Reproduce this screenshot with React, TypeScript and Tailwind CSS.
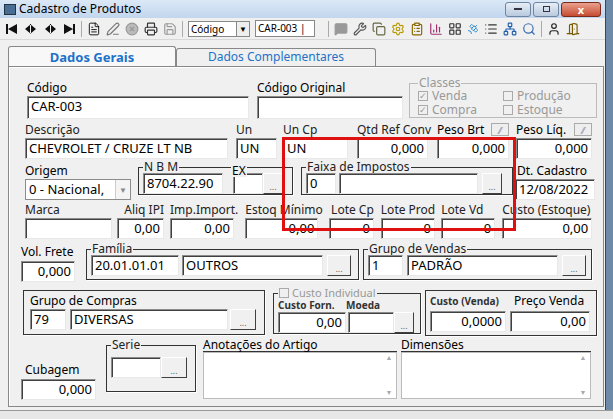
import { FileText, PenLine, XCircle, Printer, Save, MessageSquare, Wrench, Copy, Settings, ClipboardList, BarChart3, LayoutGrid, Satellite, List, Network, Search, User, DoorOpen } from "lucide-react";

const font = "font-['Liberation_Sans',Arial,sans-serif]";

const Inp = ({ w, v = "", right = false, h = "h-[21px]" }: { w: string; v?: string; right?: boolean; h?: string }) => (
  <div className={`${w} ${h} bg-white border border-[#8c8c8c] border-b-[#e8e8e8] border-r-[#e8e8e8] shadow-[inset_1px_1px_0_#404040] text-[13px] leading-[19px] px-[3px] overflow-hidden whitespace-nowrap text-black ${right ? "text-right" : ""}`}>
    {v}
  </div>
);

const Btn = ({ w = "w-[22px]", h = "h-[21px]" }: { w?: string; h?: string }) => (
  <div className={`${w} ${h} bg-[#f0f0f0] border border-white border-b-[#404040] border-r-[#404040] text-[9px] text-[#666] flex items-end justify-center leading-[12px]`}>...</div>
);

const Field = ({ label, w, v, right, cls = "" }: { label: string; w: string; v?: string; right?: boolean; cls?: string }) => (
  <div className={`flex flex-col ${cls}`}>
    <div className="text-[12px] leading-[13px] text-[#222] whitespace-nowrap mb-[2px]">{label}</div>
    <Inp w={w} v={v} right={right} />
  </div>
);

const Group = ({ legend, cls, children, dark = true }: { legend: React.ReactNode; cls: string; children: React.ReactNode; dark?: boolean }) => (
  <fieldset className={`border ${dark ? "border-[#333]" : "border-[#a0a0a0]"} shadow-[1px_1px_0_#fff] px-[4px] pb-[3px] ${cls}`}>
    <legend className="text-[12px] leading-[12px] text-[#222] px-[1px]">{legend}</legend>
    {children}
  </fieldset>
);

const Nav = ({ d }: { d: string }) => (
  <svg width="14" height="14" viewBox="0 0 14 14"><path d={d} fill="#111" /></svg>
);

const Chk = ({ on, label }: { on?: boolean; label: string }) => (
  <span className="flex items-center gap-[4px]">
    <span className="w-[10px] h-[10px] border border-[#aaa] text-[9px] leading-[8px] text-center">{on ? "✓" : ""}</span>
    {label}
  </span>
);

export default function App() {
  return (
    <div className={`w-[613px] h-[419px] bg-[#6d8aa8] overflow-hidden relative ${font}`}>
      <div className="w-[606px] h-[410px] bg-[#f0f0f0] flex flex-col border-r border-[#444]">
        {/* title bar */}
        <div className="h-[18px] bg-gradient-to-b from-[#dbe8f6] to-[#c2d6ee] flex items-center px-[4px] text-[12px] text-black">
          <div className="w-[12px] h-[11px] bg-[#4a6d94] mr-[3px] border border-[#234]" />
          <span>Cadastro de Produtos</span>
          <div className="ml-auto flex gap-[2px]">
            <div className="w-[26px] h-[15px] rounded-[3px] bg-gradient-to-b from-[#e8eef6] to-[#b9c9de] border border-[#6f84a0] flex items-center justify-center"><div className="w-[8px] h-[2px] bg-[#334]" /></div>
            <div className="w-[26px] h-[15px] rounded-[3px] bg-gradient-to-b from-[#e8eef6] to-[#b9c9de] border border-[#6f84a0] flex items-center justify-center"><div className="w-[7px] h-[6px] border border-[#334]" /></div>
            <div className="w-[40px] h-[15px] rounded-[3px] bg-gradient-to-b from-[#e9a08d] to-[#c44a30] border border-[#7a2a1a] text-white text-[11px] font-bold leading-[13px] text-center">x</div>
          </div>
        </div>
        {/* toolbar */}
        <div className="h-[22px] flex items-center gap-[5px] px-[5px] border-b border-[#d8d8d8]">
          <Nav d="M1 2h2v10H1zM12 2v10L3 7z" />
          <Nav d="M12 7L6 2v10zM1 7l6-5v10z" />
          <Nav d="M2 7l6-5v10zM13 7L7 2v10z" />
          <Nav d="M11 2h2v10h-2zM2 2v10l9-5z" />
          <div className="w-px h-[16px] bg-[#aaa]" />
          <FileText size={14} strokeWidth={1.5} />
          <PenLine size={14} color="#777" />
          <XCircle size={14} color="#999" fill="#bbb" />
          <Printer size={14} color="#333" />
          <Save size={14} color="#999" />
          <div className="w-px h-[16px] bg-[#aaa]" />
          <div className="w-[62px] h-[16px] bg-white border border-[#888] text-[10px] leading-[14px] pl-[2px] flex justify-between">Código<span className="w-[13px] border-l border-[#888] bg-[#eee] text-[8px] text-center">▼</span></div>
          <div className="w-[60px] h-[17px] bg-white border border-[#888] text-[10px] leading-[15px] pl-[2px]">CAR-003 |</div>
          <div className="w-px h-[16px] bg-[#aaa] ml-[8px]" />
          <MessageSquare size={14} color="#999" fill="#999" />
          <Wrench size={14} color="#555" />
          <Copy size={14} color="#664" />
          <Settings size={14} color="#b89a00" />
          <ClipboardList size={14} color="#886600" />
          <BarChart3 size={14} color="#a03070" />
          <LayoutGrid size={14} color="#333" />
          <Satellite size={12} color="#2a8ad4" />
          <List size={14} color="#333" />
          <Network size={14} color="#2060b0" />
          <Search size={14} color="#3a6ab0" />
          <div className="w-px h-[16px] bg-[#aaa]" />
          <User size={14} color="#222" />
          <DoorOpen size={14} color="#7a5a00" />
        </div>
        {/* tabs */}
        <div className="flex items-end h-[24px] pl-[8px] mt-[2px]">
          <div className="w-[168px] h-[21px] border border-[#888] border-b-0 rounded-t-[3px] bg-[#f8f8f8] text-[13px] font-bold text-[#1e72c8] text-center leading-[20px] relative top-px">Dados Gerais</div>
          <div className="w-[200px] h-[18px] border border-[#888] border-b-0 rounded-t-[3px] bg-[#f0f0f0] text-[12px] text-[#1e72c8] text-center leading-[16px]">Dados Complementares</div>
        </div>
        {/* panel */}
        <div className="ml-[8px] w-[596px] h-[341px] border border-[#888] shadow-[inset_1px_1px_0_#fff] flex flex-col pt-[10px] relative">
          {/* row 1 */}
          <div className="flex h-[42px]">
            <div className="flex flex-col ml-[18px] mt-[4px]">
              <div className="text-[12px] leading-[13px] mb-[2px]">Código</div>
              <Inp w="w-[222px]" h="h-[23px]" v="CAR-003" />
            </div>
            <div className="flex flex-col ml-[8px] mt-[4px]">
              <div className="text-[12px] leading-[13px] mb-[2px]">Código Original</div>
              <Inp w="w-[146px]" h="h-[23px]" />
            </div>
            <fieldset className="ml-[6px] w-[188px] h-[41px] border border-[#bbb] px-[8px] text-[#999] text-[12px] leading-[14px]">
              <legend className="px-[1px] leading-[12px]">Classes</legend>
              <div className="grid grid-cols-2">
                <Chk on label="Venda" /><Chk label="Produção" />
                <Chk on label="Compra" /><Chk label="Estoque" />
              </div>
            </fieldset>
          </div>
          {/* row 2 */}
          <div className="flex mt-[4px]">
            <Field label="Descrição" w="w-[203px]" v="CHEVROLET / CRUZE LT NB" cls="ml-[16px]" />
            <Field label="Un" w="w-[41px]" v="UN" cls="ml-[8px]" />
            <Field label="Un Cp" w="w-[65px]" v="UN" cls="ml-[6px]" />
            <Field label="Qtd Ref Conv" w="w-[71px]" v="0,000" right cls="ml-[9px]" />
            <div className="flex flex-col ml-[6px]">
              <div className="text-[12px] leading-[13px] mb-[2px] flex justify-between w-[72px]">Peso Brt<span className="w-[18px] h-[13px] border border-[#aaa] bg-[#eee] text-[9px] text-center text-[#88a]">⁄⁄</span></div>
              <Inp w="w-[72px]" v="0,000" right />
            </div>
            <div className="flex flex-col ml-[7px]">
              <div className="text-[12px] leading-[13px] mb-[2px] flex justify-between w-[76px]">Peso Líq.<span className="w-[18px] h-[13px] border border-[#aaa] bg-[#eee] text-[9px] text-center text-[#88a]">⁄⁄</span></div>
              <Inp w="w-[76px]" v="0,000" right />
            </div>
          </div>
          {/* row 3 */}
          <div className="flex mt-[2px] items-start">
            <div className="flex flex-col ml-[16px] mt-[3px]">
              <div className="text-[12px] leading-[13px] mb-[2px]">Origem</div>
              <div className="w-[106px] h-[21px] bg-white border border-[#8c8c8c] flex text-[13px] leading-[19px] pl-[3px] whitespace-nowrap overflow-hidden">
                <span className="flex-1 overflow-hidden">0 - Nacional,</span>
                <span className="w-[15px] border-l border-[#ccc] bg-[#f4f4f4] text-[8px] text-[#888] text-center">▼</span>
              </div>
            </div>
            <Group legend="N B M" cls="ml-[7px] w-[155px] h-[34px] relative">
              <span className="absolute left-[92px] -top-[8px] text-[12px] leading-[12px] bg-[#f0f0f0] px-[1px]">EX</span>
              <div className="flex items-end">
                <Inp w="w-[80px]" v="8704.22.90" />
                <div className="ml-[10px]"><Inp w="w-[30px]" /></div>
                <Btn w="w-[20px]" />
              </div>
            </Group>
            <Group legend="Faixa de Impostos" cls="ml-[8px] w-[212px] h-[34px]">
              <div className="flex">
                <Inp w="w-[30px]" v="0" />
                <div className="ml-[3px]"><Inp w="w-[139px]" /></div>
                <div className="ml-[4px]"><Btn w="w-[20px]" /></div>
              </div>
            </Group>
            <div className="flex flex-col ml-[2px] mt-[3px]">
              <div className="text-[12px] leading-[13px] mb-[2px] pl-[2px]">Dt. Cadastro</div>
              <Inp w="w-[80px]" v="12/08/2022" />
            </div>
          </div>
          {/* row 4 */}
          <div className="flex mt-[3px]">
            <Field label="Marca" w="w-[87px]" cls="ml-[16px]" />
            <Field label="Aliq IPI" w="w-[47px]" v="0,00" right cls="ml-[5px] items-end" />
            <Field label="Imp.Import." w="w-[64px]" v="0,00" right cls="ml-[6px]" />
            <Field label="Estoq Mínimo" w="w-[73px]" v="0,00" right cls="ml-[7px]" />
            <Field label="Lote Cp" w="w-[45px]" v="0" right cls="ml-[6px] items-end" />
            <Field label="Lote Prod" w="w-[54px]" v="0" right cls="ml-[7px]" />
            <Field label="Lote Vd" w="w-[54px]" v="0" right cls="ml-[6px]" />
            <Field label="Custo (Estoque)" w="w-[90px]" v="0,00" right cls="ml-[7px]" />
          </div>
          {/* row 5 */}
          <div className="flex mt-[4px] items-start">
            <div className="flex flex-col ml-[12px] mt-[2px]">
              <div className="text-[12px] leading-[13px] mb-[3px]">Vol. Frete</div>
              <Inp w="w-[54px]" v="0,000" right />
            </div>
            <Group legend="Família" cls="ml-[11px] w-[273px] h-[37px]">
              <div className="flex">
                <Inp w="w-[88px]" v="20.01.01.01" />
                <div className="ml-[3px]"><Inp w="w-[141px]" v="OUTROS" /></div>
                <div className="ml-[4px]"><Btn w="w-[24px]" /></div>
              </div>
            </Group>
            <Group legend="Grupo de Vendas" cls="ml-[4px] w-[229px] h-[37px]">
              <div className="flex">
                <Inp w="w-[35px]" v="1" />
                <div className="ml-[4px]"><Inp w="w-[151px]" v="PADRÃO" /></div>
                <div className="ml-[4px]"><Btn w="w-[24px]" /></div>
              </div>
            </Group>
          </div>
          {/* row 6 */}
          <div className="flex mt-[5px] items-start">
            <div className="ml-[14px] mt-[3px] w-[242px] h-[45px] border border-[#333] shadow-[1px_1px_0_#fff] px-[6px] pt-[3px]">
              <div className="text-[12px] leading-[13px] mb-[2px]">Grupo de Compras</div>
              <div className="flex">
                <Inp w="w-[36px]" v="79" />
                <div className="ml-[4px]"><Inp w="w-[158px]" v="DIVERSAS" /></div>
                <div className="ml-[2px]"><Btn w="w-[26px]" /></div>
              </div>
            </div>
            <Group legend={<span className="text-[#999] text-[11px] flex items-center gap-[3px]"><span className="w-[10px] h-[10px] border border-[#aaa]" />Custo Individual</span>} cls="ml-[8px] w-[148px] h-[47px]">
              <div className="flex text-[10px] font-bold text-[#333] leading-[12px]">
                <span className="w-[68px]">Custo Forn.</span><span>Moeda</span>
              </div>
              <div className="flex mt-[1px]">
                <Inp w="w-[68px]" v="0,00" right />
                <div className="ml-[2px]"><Inp w="w-[46px]" /></div>
                <Btn w="w-[20px]" />
              </div>
            </Group>
            <div className="ml-[4px] mt-[3px] w-[172px] h-[46px] border border-[#333] shadow-[1px_1px_0_#fff] px-[4px] pt-[3px]">
              <div className="flex items-end leading-[14px]">
                <span className="w-[80px] text-[10px] font-bold text-[#333]">Custo (Venda)</span>
                <span className="text-[12px] ml-[4px]">Preço Venda</span>
              </div>
              <div className="flex mt-[3px]">
                <Inp w="w-[76px]" v="0,0000" right />
                <div className="ml-[4px]"><Inp w="w-[80px]" v="0,00" right /></div>
              </div>
            </div>
          </div>
          {/* row 7 */}
          <div className="flex mt-[3px] items-start">
            <div className="flex flex-col ml-[12px] mt-[24px]">
              <div className="text-[12px] leading-[13px] mb-[3px] ml-[4px]">Cubagem</div>
              <Inp w="w-[75px]" v="0,000" right />
            </div>
            <Group legend="Serie" cls="ml-[10px] w-[90px] h-[53px]">
              <div className="flex mt-[6px]">
                <Inp w="w-[50px]" />
                <Btn w="w-[26px]" />
              </div>
            </Group>
            <div className="flex flex-col ml-[7px]">
              <div className="text-[12px] leading-[12px] border-b border-[#333] w-[194px]">Anotações do Artigo</div>
              <div className="w-[194px] h-[47px] bg-white border border-[#bbb] flex justify-end">
                <div className="w-[14px] flex flex-col justify-between text-[7px] text-[#aaa] text-center">▲<span>▼</span></div>
              </div>
            </div>
            <div className="flex flex-col ml-[4px]">
              <div className="text-[12px] leading-[12px] border-b border-[#333] w-[190px]">Dimensões</div>
              <div className="w-[190px] h-[47px] bg-white border border-[#bbb] flex justify-end">
                <div className="w-[14px] flex flex-col justify-between text-[7px] text-[#aaa] text-center">▲<span>▼</span></div>
              </div>
            </div>
          </div>
          {/* red highlight */}
          <div className="absolute left-[273px] top-[70px] w-[234px] h-[94px] border-[3px] border-[#e01010]" />
        </div>
      </div>
      <div className="h-[9px] bg-[#e8e8e8] border-t border-[#999]" />
    </div>
  );
}
